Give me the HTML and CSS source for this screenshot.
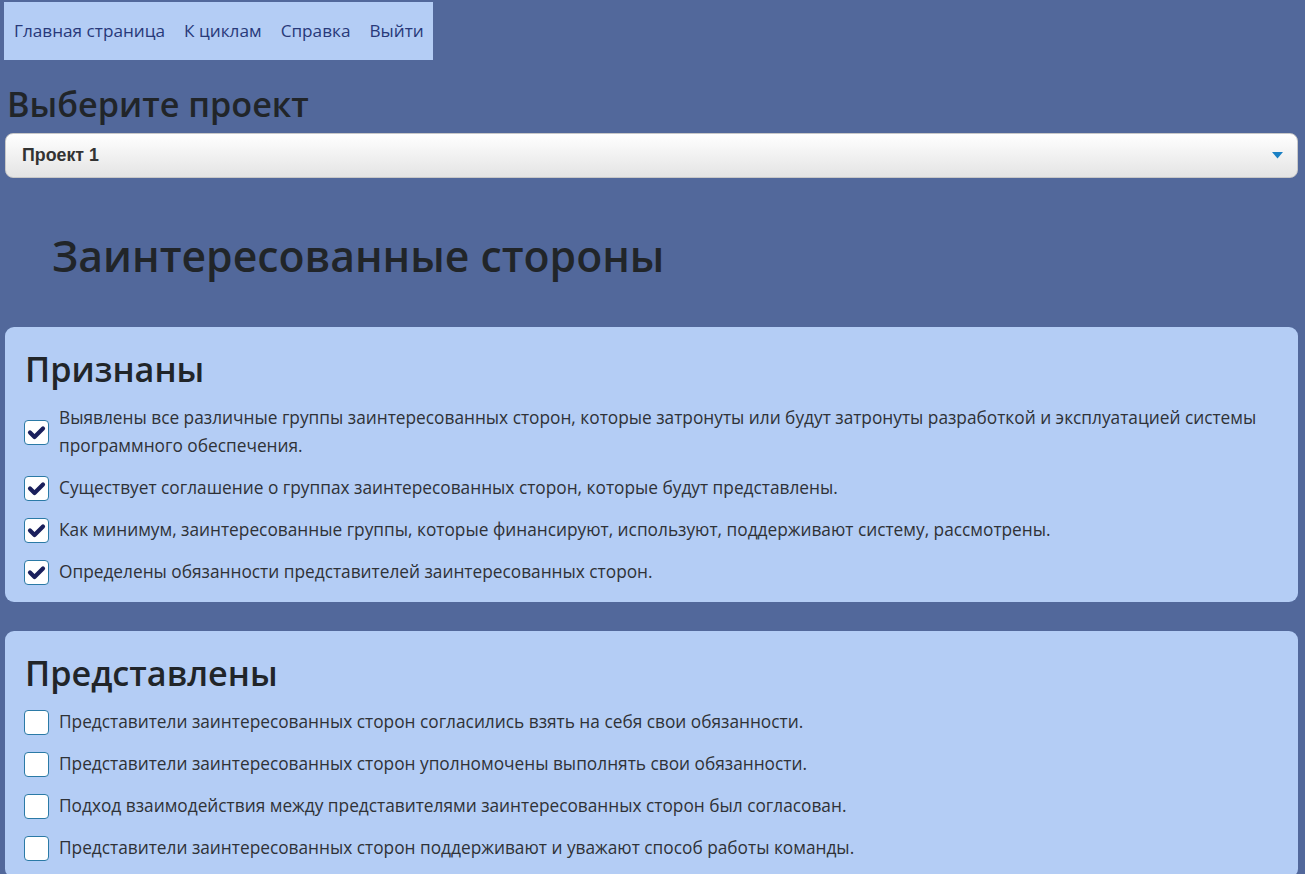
FILE: index.html
```html
<!DOCTYPE html>
<html lang="ru">
<head>
<meta charset="utf-8">
<title>Заинтересованные стороны</title>
<link rel="stylesheet" href="styles.css">
</head>
<body>
<div class="page">
  <nav class="topnav">
    <a href="#">Главная страница</a>
    <a href="#">К циклам</a>
    <a href="#">Справка</a>
    <a href="#">Выйти</a>
  </nav>

  <h2 class="choose-title">Выберите проект</h2>
  <div class="select">
    <span class="select-text">Проект 1</span>
    <svg class="select-arrow" width="11" height="7" viewBox="0 0 11 7"><path d="M0 0H11L5.5 6.5Z" fill="#1a80c4"/></svg>
  </div>

  <h1 class="main-title">Заинтересованные стороны</h1>

  <section class="card">
    <h2 class="card-title">Признаны</h2>
    <ul class="items">
      <li class="item"><span class="box checked"><svg viewBox="0 0 23 23" width="23" height="23"><path d="M5 11.5L9.5 16L18 7.5" fill="none" stroke="#1a1f5c" stroke-width="4.2" stroke-linecap="round" stroke-linejoin="round"/></svg></span><span class="label">Выявлены все различные группы заинтересованных сторон, которые затронуты или будут затронуты разработкой и эксплуатацией системы программного обеспечения.</span></li>
      <li class="item"><span class="box checked"><svg viewBox="0 0 23 23" width="23" height="23"><path d="M5 11.5L9.5 16L18 7.5" fill="none" stroke="#1a1f5c" stroke-width="4.2" stroke-linecap="round" stroke-linejoin="round"/></svg></span><span class="label">Существует соглашение о группах заинтересованных сторон, которые будут представлены.</span></li>
      <li class="item"><span class="box checked"><svg viewBox="0 0 23 23" width="23" height="23"><path d="M5 11.5L9.5 16L18 7.5" fill="none" stroke="#1a1f5c" stroke-width="4.2" stroke-linecap="round" stroke-linejoin="round"/></svg></span><span class="label">Как минимум, заинтересованные группы, которые финансируют, используют, поддерживают систему, рассмотрены.</span></li>
      <li class="item"><span class="box checked"><svg viewBox="0 0 23 23" width="23" height="23"><path d="M5 11.5L9.5 16L18 7.5" fill="none" stroke="#1a1f5c" stroke-width="4.2" stroke-linecap="round" stroke-linejoin="round"/></svg></span><span class="label">Определены обязанности представителей заинтересованных сторон.</span></li>
    </ul>
  </section>

  <section class="card">
    <h2 class="card-title">Представлены</h2>
    <ul class="items">
      <li class="item"><span class="box"></span><span class="label">Представители заинтересованных сторон согласились взять на себя свои обязанности.</span></li>
      <li class="item"><span class="box"></span><span class="label">Представители заинтересованных сторон уполномочены выполнять свои обязанности.</span></li>
      <li class="item"><span class="box"></span><span class="label">Подход взаимодействия между представителями заинтересованных сторон был согласован.</span></li>
      <li class="item"><span class="box"></span><span class="label">Представители заинтересованных сторон поддерживают и уважают способ работы команды.</span></li>
    </ul>
  </section>
</div>
</body>
</html>
```

FILE: styles.css
```css
* { box-sizing: border-box; }

html, body {
  margin: 0;
  padding: 0;
  background: #52689b;
}

body {
  font-family: "Open Sans", "Noto Sans", sans-serif;
  font-size: 17.3px;
  line-height: 1.5;
  color: #212529;
}

.page {
  padding: 2px 7px 40px 5px;
  display: flex;
  flex-direction: column;
  align-items: stretch;
}

.topnav {
  align-self: flex-start;
  margin-left: -1px;
  background: #b4cdf5;
  height: 58px;
  display: flex;
  align-items: center;
  gap: 19px;
  padding: 0 9px 0 10px;
}

.topnav a {
  color: #28397a;
  text-decoration: none;
  font-size: 17.2px;
}

.choose-title {
  margin: 23px 0 9px 2px;
  font-size: 34.2px;
  font-weight: 600;
  line-height: 41px;
  color: #212529;
}

.select {
  height: 45px;
  border: 1px solid #c8c8c8;
  border-radius: 8px;
  background: linear-gradient(#ffffff, #e4e4e4);
  display: flex;
  align-items: center;
  justify-content: space-between;
  padding: 0 14px 0 16px;
}

.select-text {
  font-family: "Liberation Sans", Arial, sans-serif;
  font-weight: bold;
  font-size: 17.8px;
  color: #333;
}

.main-title {
  margin: 52px 0 46px 47px;
  font-size: 42.7px;
  font-weight: 600;
  line-height: 51px;
  color: #212529;
}

.card {
  background: #b4cdf5;
  border-radius: 9px;
  padding: 21px 20px 16px 20px;
  margin-bottom: 29px;
}

.card-title {
  margin: 0 0 15px 0;
  font-size: 34.2px;
  font-weight: 600;
  line-height: 41px;
  color: #212529;
}

.items {
  list-style: none;
  margin: 0;
  padding: 0;
  display: flex;
  flex-direction: column;
  gap: 14px;
}

.item {
  display: flex;
  align-items: center;
  gap: 10px;
  line-height: 28px;
}

.box {
  flex: 0 0 25px;
  width: 25px;
  height: 25px;
  background: #fff;
  border: 1px solid #2b7aa6;
  border-radius: 4px;
  display: flex;
  align-items: center;
  justify-content: center;
  margin-left: -1px;
}

.box svg {
  display: block;
  width: 23px;
  height: 23px;
}

.label {
  color: #2f3237;
}
```
